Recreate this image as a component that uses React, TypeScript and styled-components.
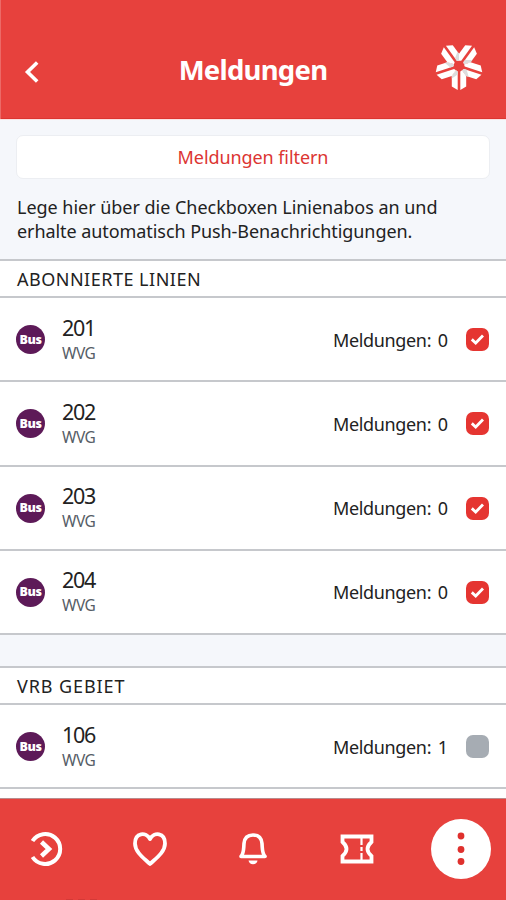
import React from "react";
import styled, { createGlobalStyle } from "styled-components";

const red = "#e7413d";
const line = "#c6c8cc";

const GlobalStyle = createGlobalStyle`
  * { box-sizing: border-box; }
  html, body { margin: 0; padding: 0; }
  body { width: 506px; height: 900px; overflow: hidden; background: #fff; }
`;

const Screen = styled.main`
  display: flex;
  flex-direction: column;
  width: 506px;
  height: 900px;
  overflow: hidden;
  background: #fff;
  color: #222;
  font-family: "Noto Sans", "Open Sans", sans-serif;
`;

const Header = styled.header`
  flex: none;
  display: grid;
  grid-template-columns: 71px 1fr 71px;
  align-items: center;
  height: 120px;
  padding-top: 22px;
  background: ${red};
  border-bottom: 1px solid #fbe1e1;
  box-shadow: inset 1px 0 #ec6a67, inset 0 -1px #dc3530;
`;

const BackButton = styled.button`
  display: flex;
  width: 44px;
  height: 44px;
  margin: 2px 0 0 10px;
  padding: 0;
  border: 0;
  background: none;
  align-items: center;
  justify-content: center;
`;

const Title = styled.h1`
  margin: 0 0 1px;
  text-align: center;
  color: #fff;
  font-size: 27.5px;
  line-height: 36px;
  font-weight: 700;
  letter-spacing: -0.75px;
`;

const Intro = styled.section`
  flex: none;
  height: 139px;
  padding: 15px 16px 0;
  background: #f5f7fb;
`;

const FilterButton = styled.button`
  display: block;
  width: 100%;
  height: 44px;
  padding: 0;
  border: 1px solid #eceef2;
  border-radius: 7px;
  background: #fff;
  color: #dc3532;
  font: 400 18px/24px "Noto Sans", sans-serif;
  letter-spacing: -0.08px;
`;

const Hint = styled.p`
  margin: 16px 0 0 1px;
  font-size: 18px;
  line-height: 24.4px;
  white-space: nowrap;
`;

const HintLine = styled.span<{ $spacing: number }>`
  display: block;
  letter-spacing: ${(p) => p.$spacing}px;
`;

const GroupHeading = styled.h2<{ $spacing: number }>`
  flex: none;
  display: flex;
  align-items: center;
  height: 39px;
  margin: 0;
  padding: 0 17px;
  border-top: 2px solid ${line};
  border-bottom: 2px solid ${line};
  font-size: 18px;
  font-weight: 400;
  letter-spacing: ${(p) => p.$spacing}px;
`;

const Row = styled.div`
  flex: none;
  display: grid;
  grid-template-columns: 30px 1fr auto 23px;
  align-items: center;
  height: 84.25px;
  padding: 1px 17px 0 16px;
  border-bottom: 2px solid ${line};
`;

const BusBadge = styled.span`
  display: grid;
  place-items: center;
  width: 29px;
  height: 29px;
  border-radius: 50%;
  background: #5d1a58;
  color: #fff;
  font: 900 12.5px/16px "Noto Sans", sans-serif;
  letter-spacing: -0.4px;
`;

const LineInfo = styled.div`
  padding: 0 0 0 16px;
`;

const LineNumber = styled.div`
  font-size: 21.5px;
  line-height: 26px;
  letter-spacing: -1.3px;
`;

const Operator = styled.div`
  color: #555d66;
  font-size: 15.5px;
  line-height: 24px;
  letter-spacing: -0.5px;
`;

const Count = styled.div`
  margin-right: 18px;
  width: 115px;
  font-size: 18px;
  line-height: 24px;
  letter-spacing: -0.35px;
  word-spacing: 2.3px;
  white-space: nowrap;
`;

const Checkbox = styled.span<{ $checked: boolean }>`
  display: grid;
  place-items: center;
  width: 23px;
  height: 23px;
  border-radius: 7px;
  background: ${(p) => (p.$checked ? "#e53531" : "#a6acb3")};
`;

const Gap = styled.div`
  flex: none;
  height: 31px;
  background: #f5f7fb;
`;

const NextRow = styled.div`
  flex: none;
  height: 9px;
`;

const Nav = styled.nav`
  flex: 1;
  display: grid;
  grid-template-columns: repeat(5, 103.75px);
  grid-template-rows: 100px;
  margin-left: -6px;
  background: ${red};
  border-top: 1px solid #b98c8d;
`;

const NavItem = styled.div`
  display: grid;
  place-items: center;
`;

const ActiveDisc = styled.div`
  display: grid;
  place-items: center;
  width: 60px;
  height: 60px;
  border-radius: 50%;
  background: #fff;
`;

const Underlay = styled.div`
  flex: none;
  display: flex;
  gap: 5px;
  height: 2px;
  padding-left: 66px;
  background: ${red};
`;

const UnderlayMark = styled.span`
  width: 7px;
  height: 2px;
  background: #d33a37;
`;

const Logo = styled.svg`
  display: block;
  margin: -10px 0 0 -1px;
`;

const StarLogo = () => (
  <Logo width="50" height="50" viewBox="-25 -25 50 50">
    {[0, 72, 144, 216, 288].map((a) => (
      <g key={a} transform={`rotate(${a})`}>
        <path d="M-1.3 24L-7.2 20.5V9.9L-3.1 4.3L-1.3 5.6Z" fill="#fff" />
        <path d="M1.3 24L7.2 20.5V9.9L3.1 4.3L1.3 5.6Z" fill="#fff" />
        <path d="M-7.2 12.5V9.9L-3.1 4.3L-1.3 5.6V8.5Z" fill="#dddcdd" />
      </g>
    ))}
  </Logo>
);

const rows = ["201", "202", "203", "204"];

const LineRow = ({ number, count, checked }: { number: string; count: number; checked: boolean }) => (
  <Row>
    <BusBadge>Bus</BusBadge>
    <LineInfo>
      <LineNumber>{number}</LineNumber>
      <Operator>WVG</Operator>
    </LineInfo>
    <Count>Meldungen: {count}</Count>
    <Checkbox $checked={checked}>
      {checked && (
        <svg width="15" height="15" viewBox="0 0 15 15" fill="none" stroke="#fff" strokeWidth="2.8">
          <path d="M1.8 7.4L5.7 11L13 3.5" />
        </svg>
      )}
    </Checkbox>
  </Row>
);

export default function App() {
  return (
    <Screen>
      <GlobalStyle />
      <Header>
        <BackButton aria-label="Zurück">
          <svg width="18" height="24" viewBox="0 0 18 24" fill="none" stroke="#fff" strokeWidth="3.6">
            <path d="M14.2 2.5L4.5 12L14.2 21.5" />
          </svg>
        </BackButton>
        <Title>Meldungen</Title>
        <StarLogo />
      </Header>
      <Intro>
        <FilterButton>Meldungen filtern</FilterButton>
        <Hint>
          <HintLine $spacing={-0.03}>Lege hier über die Checkboxen Linienabos an und</HintLine>
          <HintLine $spacing={-0.07}>erhalte automatisch Push-Benachrichtigungen.</HintLine>
        </Hint>
      </Intro>
      <GroupHeading $spacing={0.5}>ABONNIERTE LINIEN</GroupHeading>
      {rows.map((n) => (
        <LineRow key={n} number={n} count={0} checked />
      ))}
      <Gap />
      <GroupHeading $spacing={0.9}>VRB GEBIET</GroupHeading>
      <LineRow number="106" count={1} checked={false} />
      <NextRow />
      <Nav>
        <NavItem>
          <svg width="36" height="36" viewBox="0 0 36 36" fill="none" stroke="#fff" strokeWidth="4">
            <path d="M4.5 10A15 15 0 1 1 4.5 26" />
            <path d="M13.5 11L21 18L13.5 25" strokeWidth="4.5" />
          </svg>
        </NavItem>
        <NavItem>
          <svg width="36" height="36" viewBox="0 0 36 36" fill="none" stroke="#fff" strokeWidth="3.8" strokeLinejoin="round">
            <path d="M18 33C13 28 3 21.5 3 12.5C3 1.5 14 .5 18 8C22 .5 33 1.5 33 12.5C33 21.5 23 28 18 33Z" />
          </svg>
        </NavItem>
        <NavItem>
          <svg width="36" height="36" viewBox="0 0 36 36" fill="none" stroke="#fff" strokeWidth="3.6" strokeLinejoin="round">
            <path d="M6 25.5C9 22 8.5 19 9 12.5C9.5 6.5 13 4 18 4S26.5 6.5 27 12.5C27.5 19 27 22 30 25.5Z" />
            <path d="M13.5 29.5A4.6 4.6 0 0 0 22.5 29.5Z" fill="#fff" stroke="none" />
          </svg>
        </NavItem>
        <NavItem>
          <svg width="36" height="36" viewBox="0 0 36 36" fill="none" stroke="#fff" strokeWidth="3.8">
            <path d="M3.5 5.5H32.5V11Q24.5 18 32.5 25V30.5H3.5V25Q11.5 18 3.5 11Z" />
            <path d="M22.5 6V30" strokeWidth="2.2" strokeDasharray="8 2 4 2" />
          </svg>
        </NavItem>
        <NavItem>
          <ActiveDisc>
            <svg width="10" height="36" viewBox="0 0 10 36" fill="#df302d">
              <circle cx="5" cy="5" r="3.4" />
              <circle cx="5" cy="18.5" r="3.4" />
              <circle cx="5" cy="30.5" r="3.4" />
            </svg>
          </ActiveDisc>
        </NavItem>
      </Nav>
      <Underlay>
        <UnderlayMark />
        <UnderlayMark />
        <UnderlayMark />
      </Underlay>
    </Screen>
  );
}
